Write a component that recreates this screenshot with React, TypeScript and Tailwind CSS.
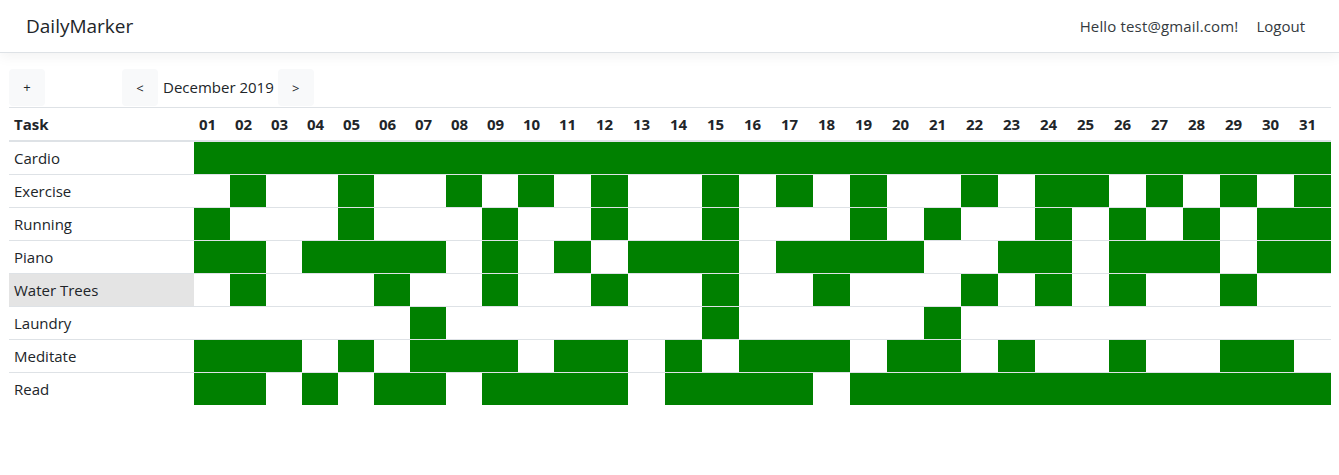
import React from "react";

const days = Array.from({ length: 31 }, (_, i) => String(i + 1).padStart(2, "0"));

const tasks: { name: string; done: number[]; hover?: boolean }[] = [
  { name: "Cardio", done: Array.from({ length: 31 }, (_, i) => i + 1) },
  { name: "Exercise", done: [2, 5, 8, 10, 12, 15, 17, 19, 22, 24, 25, 27, 29, 31] },
  { name: "Running", done: [1, 5, 9, 12, 15, 19, 21, 24, 26, 28, 30, 31] },
  { name: "Piano", done: [1, 2, 4, 5, 6, 7, 9, 11, 13, 14, 15, 17, 18, 19, 20, 23, 24, 26, 27, 28, 30, 31] },
  { name: "Water Trees", done: [2, 6, 9, 12, 15, 18, 22, 24, 26, 29], hover: true },
  { name: "Laundry", done: [7, 15, 21] },
  { name: "Meditate", done: [1, 2, 3, 5, 7, 8, 9, 11, 12, 14, 16, 17, 18, 20, 21, 23, 26, 29, 30] },
  { name: "Read", done: [1, 2, 4, 6, 7, 9, 10, 11, 12, 14, 15, 16, 17, 19, 20, 21, 22, 23, 24, 25, 26, 27, 28, 29, 30, 31] },
];

const cols = "grid grid-cols-[185px_repeat(10,36px)_repeat(21,37px)]";

export default function App() {
  return (
    <div
      className="min-h-[475px] bg-white text-[#212529]"
      style={{ fontFamily: '"Open Sans", "Noto Sans", sans-serif' }}
    >
      <nav className="relative z-10 flex h-[53px] items-center justify-between border-b border-[#dee2e6] bg-white pl-[26px] pr-[34px] shadow-[0_4px_12px_rgba(0,0,0,0.05)]">
        <span className="text-[19px] leading-none">DailyMarker</span>
        <div className="flex items-center gap-[18px] text-[15px] text-[#343a40]">
          <span className="tracking-[0.15px]">Hello test@gmail.com!</span>
          <span>Logout</span>
        </div>
      </nav>

      <main className="pl-[9px] pr-[8px] pt-[16px]">
        <div className="flex h-[38px] items-start">
          <button className="flex h-[37px] w-[36px] items-center justify-center rounded bg-[#f8f9fa] text-[13px]">
            +
          </button>
          <div className="ml-[77px] flex items-center">
            <button className="flex h-[37px] w-[36px] items-center justify-center rounded bg-[#f8f9fa] pt-[3px] text-[13px]">
              &lt;
            </button>
            <span className="ml-[5px] mr-[4px] text-[15px]">December 2019</span>
            <button className="flex h-[37px] w-[36px] items-center justify-center rounded bg-[#f8f9fa] pt-[3px] text-[13px]">
              &gt;
            </button>
          </div>
        </div>

        <div className="border-t border-[#dee2e6]">
          <div className={cols + " h-[34px] items-center border-b-2 border-[#dee2e6] text-[15px] font-bold"}>
            <div className="pl-[5px]">Task</div>
            {days.map((d) => (
              <div key={d} className="pl-[5px]">
                {d}
              </div>
            ))}
          </div>
          {tasks.map((t, ri) => (
            <div
              key={t.name}
              className={cols + " text-[15px] " + (ri === 0 ? "h-[32px]" : "h-[33px] border-t border-[#dee2e6]")}
            >
              <div className={"flex items-center pl-[5px] " + (t.hover ? "bg-[#e4e4e4]" : "")}>{t.name}</div>
              {days.map((d, di) => (
                <div key={d} className={t.done.includes(di + 1) ? "bg-[#008000]" : ""} />
              ))}
            </div>
          ))}
        </div>
      </main>
    </div>
  );
}
